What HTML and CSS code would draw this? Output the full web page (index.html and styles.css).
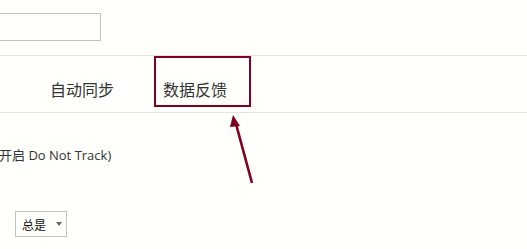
FILE: index.html
```html
<!DOCTYPE html>
<html lang="zh-CN">
<head>
  <meta charset="UTF-8">
  <title>设置</title>
  <link rel="stylesheet" href="styles.css">
</head>
<body>
  <div class="top-bar">
    <input class="search-box" type="text">
  </div>

  <div class="tabs">
    <div class="tab">自动同步</div>
    <div class="tab active">数据反馈</div>
  </div>

  <div class="content">
    <p class="dnt">开启 Do Not Track)</p>
    <div class="select-box">
      <span>总是</span>
      <span class="caret"></span>
    </div>
  </div>

  <svg class="pointer" width="527" height="249" viewBox="0 0 527 249">
    <line x1="252" y1="183" x2="236" y2="124" stroke="#800020" stroke-width="2.6"/>
    <polygon points="233,115 240,126 230,127" fill="#800020"/>
  </svg>
</body>
</html>
```

FILE: styles.css
```css
body {
  margin: 0;
  background: #fffffc;
  font-family: "Open Sans", "Noto Sans CJK SC", sans-serif;
  color: #333;
  width: 527px;
  height: 249px;
  overflow: hidden;
  position: relative;
}
.top-bar {
  height: 56px;
  border-bottom: 1px solid #e2e2e0;
  padding-top: 13px;
  box-sizing: border-box;
}
.search-box {
  display: block;
  width: 121px;
  height: 28px;
  margin-left: -20px;
  border: 1px solid #c2c2c0;
  background: #fffffc;
  box-sizing: border-box;
  padding: 0;
}
.tabs {
  display: flex;
  gap: 16px;
  padding-left: 41px;
  height: 57px;
  border-bottom: 1px solid #e2e2e0;
  box-sizing: border-box;
}
.tab {
  padding: 21px 22px 6px 7px;
  border: 2px solid transparent;
  font-family: "Noto Sans CJK SC", sans-serif;
  font-size: 16px;
  line-height: 20px;
  height: 20px;
}
.tab.active {
  border-color: #800020;
}
.content {
  padding-top: 34px;
}
.dnt {
  margin: 0 0 0 -1px;
  font-size: 13px;
  line-height: 16px;
}
.select-box {
  margin: 48px 0 0 15px;
  width: 52px;
  height: 26px;
  border: 1px solid #c2c2c0;
  box-sizing: border-box;
  display: flex;
  align-items: center;
  padding-left: 6px;
  font-size: 12px;
  font-family: "Noto Sans CJK SC", sans-serif;
  color: #111;
}
.caret {
  margin-left: 10px;
  width: 0;
  height: 0;
  border-left: 3px solid transparent;
  border-right: 3px solid transparent;
  border-top: 4px solid #666;
}
.pointer {
  position: absolute;
  left: 0;
  top: 0;
}
```
